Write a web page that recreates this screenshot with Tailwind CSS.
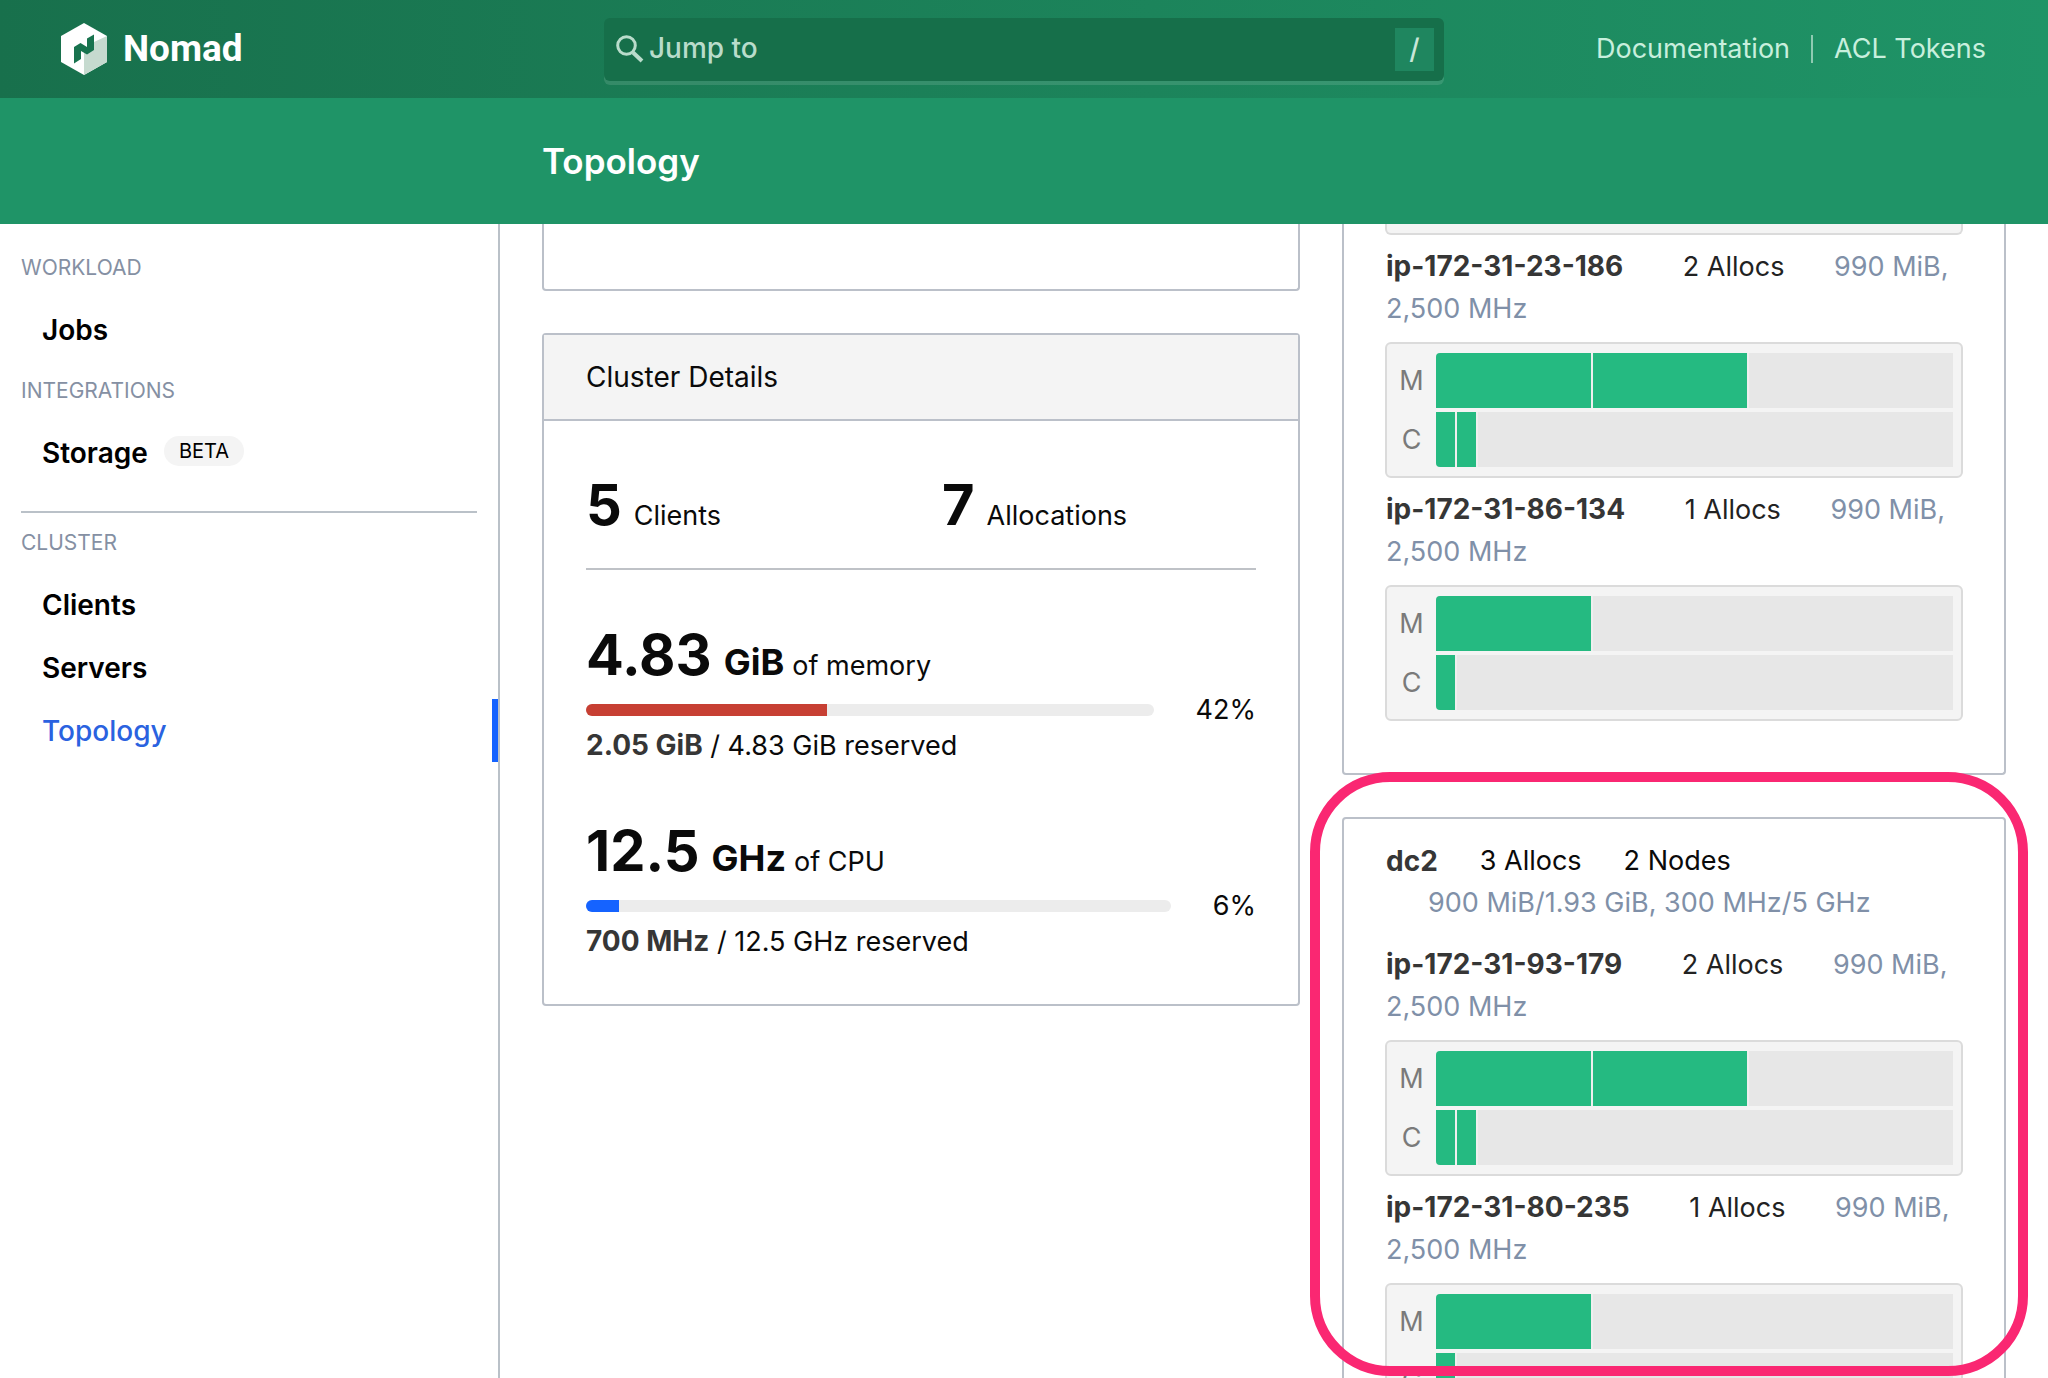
<!DOCTYPE html>
<html lang="en">
<head>
<meta charset="utf-8">
<title>Topology - Nomad</title>
<script src="https://cdn.jsdelivr.net/npm/@tailwindcss/browser@4"></script>
</head>
<body class="flex h-screen flex-col overflow-hidden bg-white font-['Inter',sans-serif] text-[27px] leading-[42px] text-[#0a0a0a]">

<header class="shrink-0 bg-[#1f9467] text-white">
  <div class="grid h-[98px] grid-cols-[1fr_840px_1fr] items-center bg-linear-to-r from-[#18704c] to-[#1f9467]">
    <a href="#" class="flex items-center gap-4 pl-[61px] font-['Roboto',sans-serif] text-[37px] font-bold">
      <svg class="h-[52px] w-[46px]" viewBox="0 0 46 52" aria-hidden="true">
        <path fill="#fff" d="M23 0 46 13 46 39 23 52 0 39 0 13z"/>
        <path fill="#c6dacf" d="M46 13 46 39 23 52 23 28 33 27 33 19z"/>
        <path fill="#18734e" d="M33 11.500V27L26 31.500 20 28V36L13 40.500V24L19.500 20 26 24V15.500z"/>
      </svg>
      <span>Nomad</span>
    </a>
    <label class="flex h-[63px] items-center rounded-md bg-[#166f4a] pr-[10px] pl-3 shadow-[0_4px_0_#ffffff1f]">
      <svg class="h-7 w-7 shrink-0" viewBox="0 0 28 28" fill="none" stroke="#b9dccb" stroke-width="3" aria-hidden="true">
        <circle cx="10.500" cy="10.500" r="8.800"/><path stroke-width="4" d="M17 17.500 26 26"/>
      </svg>
      <input type="text" placeholder="Jump to" aria-label="Jump to" class="mb-0.5 ml-[5px] min-w-0 flex-1 bg-transparent text-[28px] font-medium text-white outline-none placeholder:text-[#b9dccb]">
      <kbd class="flex h-[43px] w-[39px] items-center justify-center bg-[#1f865f] font-['Inter',sans-serif] text-[28px] font-medium text-[#c9e6d9]">/</kbd>
    </label>
    <nav class="flex items-center justify-end pr-[62px] text-[#c8efdd]">
      <a href="#">Documentation</a>
      <span class="mx-[21px] h-7 w-[2px] bg-[#8fcbb2]"></span>
      <a href="#">ACL Tokens</a>
    </nav>
  </div>
  <div class="flex h-[126px] items-center pl-[542px]">
    <h1 class="text-[35px] font-semibold">Topology</h1>
  </div>
</header>

<div class="flex min-h-0 flex-1">
  <aside class="w-[500px] shrink-0 border-r-2 border-[#bac1c8] pt-[14px] text-[28px] font-semibold text-black">
    <h2 class="flex h-[60px] items-center pl-[21px] text-[21px] font-normal text-[#8590a3]">WORKLOAD</h2>
    <a href="#" class="flex h-[63px] items-center pl-[42px]">Jobs</a>
    <h2 class="flex h-[60px] items-center pl-[21px] text-[21px] font-normal text-[#8590a3]">INTEGRATIONS</h2>
    <a href="#" class="flex h-[63px] items-center pl-[42px]">Storage
      <span class="mb-1 ml-4 rounded-full bg-[#f4f4f4] px-[15px] text-[20px] leading-[30px] font-normal">BETA</span>
    </a>
    <hr class="mx-[21px] mt-[27px] border-t-2 border-[#bac1c8]">
    <h2 class="flex h-[60px] items-center pl-[21px] text-[21px] font-normal text-[#8590a3]">CLUSTER</h2>
    <a href="#" class="flex h-[63px] items-center pl-[42px]">Clients</a>
    <a href="#" class="flex h-[63px] items-center pl-[42px]">Servers</a>
    <a href="#" aria-current="page" class="flex h-[63px] items-center border-r-6 border-[#1563ff] pl-[42px] font-medium text-[#2a62e0]">Topology</a>
  </aside>

  <main class="grid min-w-0 flex-1 grid-cols-[758fr_664fr] items-start gap-[42px] overflow-hidden px-[42px]">
    <div class="flex flex-col gap-[42px]">
      <section class="h-[67px] rounded-b-[4px] border-2 border-t-0 border-[#bbc0c9]"></section>

      <section class="rounded-[4px] border-2 border-[#bbc0c9]">
        <h2 class="border-b-2 border-[#bbc0c9] bg-[#f4f4f4] px-[42px] py-[21px] text-[28px]">Cluster Details</h2>
        <div class="p-[42px]">
          <div class="grid grid-cols-2 gap-[42px]">
            <p class="flex items-baseline gap-3"><b class="text-[56px] leading-[84px]">5</b> Clients</p>
            <p class="flex items-baseline gap-3"><b class="text-[56px] leading-[84px]">7</b> Allocations</p>
          </div>
          <hr class="mt-[21px] mb-[43px] border-t-2 border-[#bfc2c7]">
          <div class="flex flex-col gap-[43px]">
            <div>
              <p class="flex items-baseline"><b class="text-[56px] leading-[84px]">4.83</b><b class="ml-3 text-[36px]">GiB</b><span class="ml-2">of memory</span></p>
              <div class="mb-px flex h-[26px] items-center gap-[42px]">
                <div class="h-3 flex-1 overflow-hidden rounded-full bg-[#ececec]"><div class="h-full bg-[#c73f33]" style="width:42.4%"></div></div>
                <span>42%</span>
              </div>
              <p class="h-[42px]"><b class="text-[28px] font-bold text-[#363636]">2.05 GiB</b> / 4.83 GiB reserved</p>
            </div>
            <div>
              <p class="flex items-baseline"><b class="text-[56px] leading-[84px]">12.5</b><b class="ml-3 text-[36px]">GHz</b><span class="ml-2">of CPU</span></p>
              <div class="mb-px flex h-[26px] items-center gap-[42px]">
                <div class="h-3 flex-1 overflow-hidden rounded-full bg-[#ececec]"><div class="h-full bg-[#1563ff]" style="width:5.6%"></div></div>
                <span>6%</span>
              </div>
              <p class="h-[42px]"><b class="text-[28px] font-bold text-[#363636]">700 MHz</b> / 12.5 GHz reserved</p>
            </div>
          </div>
        </div>
      </section>
    </div>

    <div class="flex flex-col gap-[42px]">
      <section class="rounded-b-[4px] border-2 border-t-0 border-[#bbc0c9] px-[41px] pb-[52px]">
        <div class="h-[11px] rounded-b-[6px] border-2 border-t-0 border-[#dbdbdb] bg-[#f4f4f4]"></div>

        <article class="pt-[10px]">
          <p class="mb-3 pl-px text-[#222]"><strong class="text-[28px] text-[#363636]">ip-172-31-23-186</strong> <span class="ml-[52px]">2 Allocs</span> <span class="ml-[42px] text-[#8090a8]">990 MiB,<br>2,500 MHz</span></p>
          <div class="grid grid-cols-[49px_1fr] gap-y-1 rounded-[6px] border-2 border-[#dbdbdb] bg-[#f4f4f4] py-[9px] pr-2 text-[#7a7a7a]">
            <span class="self-center text-center">M</span>
            <div class="flex h-[55px] overflow-hidden rounded-tl-[4px] bg-[#e7e7e7]">
              <div class="border-r-2 border-[#efefef] bg-[#25ba81]" style="width:30.3%"></div>
              <div class="border-r-2 border-[#efefef] bg-[#25ba81]" style="width:30.3%"></div>
            </div>
            <span class="self-center text-center">C</span>
            <div class="flex h-[55px] overflow-hidden rounded-bl-[4px] bg-[#e7e7e7]">
              <div class="border-r-2 border-[#efefef] bg-[#25ba81]" style="width:4.1%"></div>
              <div class="border-r-2 border-[#efefef] bg-[#25ba81]" style="width:4.1%"></div>
            </div>
          </div>
        </article>

        <article class="pt-[10px]">
          <p class="mb-3 pl-px text-[#222]"><strong class="text-[28px] text-[#363636]">ip-172-31-86-134</strong> <span class="ml-[52px]">1 Allocs</span> <span class="ml-[42px] text-[#8090a8]">990 MiB,<br>2,500 MHz</span></p>
          <div class="grid grid-cols-[49px_1fr] gap-y-1 rounded-[6px] border-2 border-[#dbdbdb] bg-[#f4f4f4] py-[9px] pr-2 text-[#7a7a7a]">
            <span class="self-center text-center">M</span>
            <div class="flex h-[55px] overflow-hidden rounded-tl-[4px] bg-[#e7e7e7]">
              <div class="border-r-2 border-[#efefef] bg-[#25ba81]" style="width:30.3%"></div>
            </div>
            <span class="self-center text-center">C</span>
            <div class="flex h-[55px] overflow-hidden rounded-bl-[4px] bg-[#e7e7e7]">
              <div class="border-r-2 border-[#efefef] bg-[#25ba81]" style="width:4.1%"></div>
            </div>
          </div>
        </article>
      </section>

      <section class="relative rounded-[4px] border-2 border-[#bbc0c9] px-[41px] pt-[21px] pb-[52px]">
        <div class="mb-[9px] flex flex-wrap gap-x-[42px] pl-px">
          <strong class="text-[28px] text-[#363636]">dc2</strong>
          <span>3 Allocs</span>
          <span>2 Nodes</span>
          <span class="basis-full pl-[42px] text-[#8090a8]">900 MiB/1.93 GiB, 300 MHz/5 GHz</span>
        </div>

        <article class="pt-[10px]">
          <p class="mb-3 pl-px text-[#222]"><strong class="text-[28px] text-[#363636]">ip-172-31-93-179</strong> <span class="ml-[52px]">2 Allocs</span> <span class="ml-[42px] text-[#8090a8]">990 MiB,<br>2,500 MHz</span></p>
          <div class="grid grid-cols-[49px_1fr] gap-y-1 rounded-[6px] border-2 border-[#dbdbdb] bg-[#f4f4f4] py-[9px] pr-2 text-[#7a7a7a]">
            <span class="self-center text-center">M</span>
            <div class="flex h-[55px] overflow-hidden rounded-tl-[4px] bg-[#e7e7e7]">
              <div class="border-r-2 border-[#efefef] bg-[#25ba81]" style="width:30.3%"></div>
              <div class="border-r-2 border-[#efefef] bg-[#25ba81]" style="width:30.3%"></div>
            </div>
            <span class="self-center text-center">C</span>
            <div class="flex h-[55px] overflow-hidden rounded-bl-[4px] bg-[#e7e7e7]">
              <div class="border-r-2 border-[#efefef] bg-[#25ba81]" style="width:4.1%"></div>
              <div class="border-r-2 border-[#efefef] bg-[#25ba81]" style="width:4.1%"></div>
            </div>
          </div>
        </article>

        <article class="pt-[10px]">
          <p class="mb-3 pl-px text-[#222]"><strong class="text-[28px] text-[#363636]">ip-172-31-80-235</strong> <span class="ml-[52px]">1 Allocs</span> <span class="ml-[42px] text-[#8090a8]">990 MiB,<br>2,500 MHz</span></p>
          <div class="grid grid-cols-[49px_1fr] gap-y-1 rounded-[6px] border-2 border-[#dbdbdb] bg-[#f4f4f4] py-[9px] pr-2 text-[#7a7a7a]">
            <span class="self-center text-center">M</span>
            <div class="flex h-[55px] overflow-hidden rounded-tl-[4px] bg-[#e7e7e7]">
              <div class="border-r-2 border-[#efefef] bg-[#25ba81]" style="width:30.3%"></div>
            </div>
            <span class="self-center text-center">C</span>
            <div class="flex h-[55px] overflow-hidden rounded-bl-[4px] bg-[#e7e7e7]">
              <div class="border-r-2 border-[#efefef] bg-[#25ba81]" style="width:4.1%"></div>
            </div>
          </div>
        </article>

        <!-- Highlight ring around the dc2 datacenter -->
        <div class="pointer-events-none absolute -top-[47px] -right-6 -left-[34px] h-[604px] rounded-[80px] border-10 border-[#fa2772]"></div>
      </section>
    </div>
  </main>
</div>
</body>
</html>
